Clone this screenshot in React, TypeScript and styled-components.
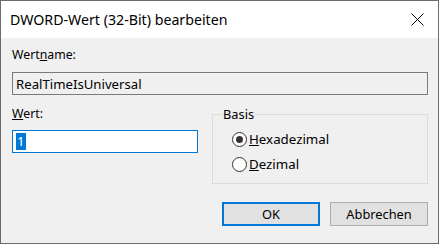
import React from 'react';
import styled, { createGlobalStyle } from 'styled-components';

const Global = createGlobalStyle`
  html, body {
    margin: 0;
    padding: 0;
    background: #ffffff;
  }
  body {
    font-family: 'Segoe UI', 'Noto Sans', 'Liberation Sans', sans-serif;
    font-size: 12px;
    color: #000;
  }
`;

const Window = styled.div`
  width: 437px;
  height: 242px;
  border: 1px solid #6b6b6b;
  background: #f0f0f0;
  display: flex;
  flex-direction: column;
`;

const TitleBar = styled.div`
  height: 37px;
  background: #ffffff;
  display: flex;
  align-items: center;
  justify-content: space-between;
  padding: 0 14px 0 9px;
  font-size: 14.2px;
`;

const Body = styled.div`
  flex: 1;
  display: flex;
  flex-direction: column;
  padding: 9px 10px 0 11px;
`;

const Label = styled.div`
  line-height: 16px;
  height: 16px;
  font-size: 12.3px;
`;

const Input = styled.div<{ $focus?: boolean; $readonly?: boolean }>`
  height: 21px;
  box-sizing: content-box;
  border: 1px solid ${(p) => (p.$focus ? '#0078d7' : '#7a7a7a')};
  background: ${(p) => (p.$readonly ? '#f0f0f0' : '#ffffff')};
  display: flex;
  align-items: center;
  padding-left: 3px;
  font-size: 13.2px;
`;

const Selected = styled.span`
  background: #0078d7;
  color: #ffffff;
  line-height: 17px;
  padding: 0 1px;
`;

const Row = styled.div`
  display: flex;
  gap: 14px;
  margin-top: 11px;
`;

const Column = styled.div`
  display: flex;
  flex-direction: column;
  width: 186px;
`;

const Group = styled.fieldset`
  margin: 0;
  flex: 1;
  border: 1px solid #dcdcdc;
  border-radius: 0;
  padding: 6px 0 8px 19px;
  height: 62px;
  display: flex;
  flex-direction: column;
  gap: 3px;
`;

const Legend = styled.legend`
  padding: 0 1px;
  margin-left: -10px;
  line-height: 16px;
  font-size: 12.8px;
`;

const Radio = styled.div`
  display: flex;
  align-items: center;
  gap: 2px;
  height: 22px;
  font-size: 13.3px;
`;

const Dot = styled.span<{ $checked?: boolean }>`
  width: 13px;
  height: 13px;
  border: 1px solid #333;
  border-radius: 50%;
  background: #fff;
  display: flex;
  align-items: center;
  justify-content: center;
  &::after {
    content: '';
    width: 7px;
    height: 7px;
    border-radius: 50%;
    background: ${(p) => (p.$checked ? '#333' : 'transparent')};
  }
`;

const Buttons = styled.div`
  display: flex;
  justify-content: flex-end;
  gap: 10px;
  margin-top: 18px;
`;

const Button = styled.div<{ $default?: boolean }>`
  width: ${(p) => (p.$default ? '94px' : '96px')};
  height: ${(p) => (p.$default ? '20px' : '22px')};
  border: ${(p) => (p.$default ? '2px solid #0078d7' : '1px solid #adadad')};
  background: #e1e1e1;
  display: flex;
  align-items: center;
  justify-content: center;
  font-size: 12.8px;
`;

export default function App() {
  return (
    <>
      <Global />
      <Window>
        <TitleBar>
          <span>DWORD-Wert (32-Bit) bearbeiten</span>
          <svg width="13" height="13" viewBox="0 0 13 13">
            <path d="M0.5 0.5 L12.5 12.5 M12.5 0.5 L0.5 12.5" stroke="#000" strokeWidth="1" />
          </svg>
        </TitleBar>
        <Body>
          <Label>
            Wert<u>n</u>ame:
          </Label>
          <div style={{ height: 9 }} />
          <Input $readonly>RealTimeIsUniversal</Input>
          <Row>
            <Column>
              <Label>
                <u>W</u>ert:
              </Label>
              <div style={{ height: 8 }} />
              <Input $focus>
                <Selected>1</Selected>
              </Input>
            </Column>
            <Group>
              <Legend>Basis</Legend>
              <Radio>
                <Dot $checked />
                <span>
                  <u>H</u>exadezimal
                </span>
              </Radio>
              <Radio>
                <Dot />
                <span>
                  <u>D</u>ezimal
                </span>
              </Radio>
            </Group>
          </Row>
          <Buttons>
            <Button $default>OK</Button>
            <Button>Abbrechen</Button>
          </Buttons>
        </Body>
      </Window>
    </>
  );
}
